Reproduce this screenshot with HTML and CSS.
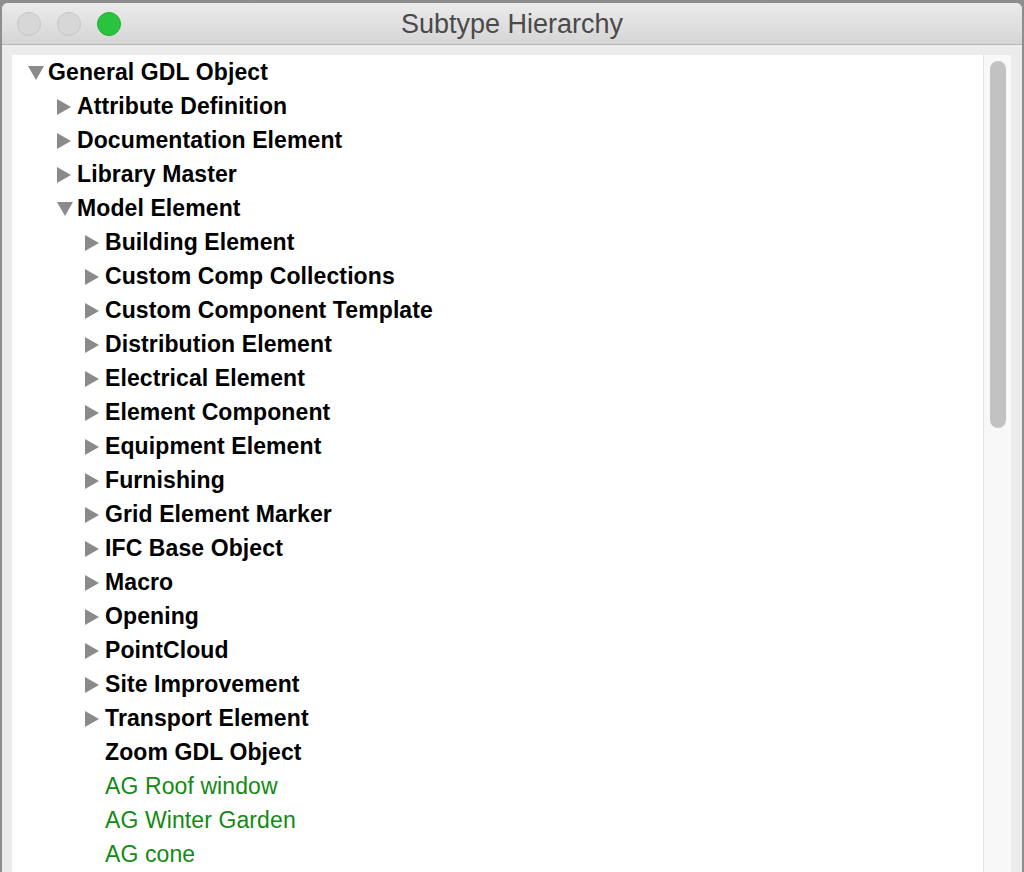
FILE: index.html
```html
<!DOCTYPE html>
<html>
<head>
<meta charset="utf-8">
<title>Subtype Hierarchy</title>
<link rel="stylesheet" href="styles.css">
</head>
<body>
<div class="window">
  <div class="titlebar">
    <div class="lights">
      <span class="light gray"></span>
      <span class="light gray"></span>
      <span class="light green"></span>
    </div>
    <div class="title">Subtype Hierarchy</div>
  </div>
  <div class="content">
    <div class="panel">
      <ul class="tree">
        <li class="row l0"><span class="tri open"></span><span class="label">General GDL Object</span></li>
        <li class="row l1"><span class="tri closed"></span><span class="label">Attribute Definition</span></li>
        <li class="row l1"><span class="tri closed"></span><span class="label">Documentation Element</span></li>
        <li class="row l1"><span class="tri closed"></span><span class="label">Library Master</span></li>
        <li class="row l1"><span class="tri open"></span><span class="label">Model Element</span></li>
        <li class="row l2"><span class="tri closed"></span><span class="label">Building Element</span></li>
        <li class="row l2"><span class="tri closed"></span><span class="label">Custom Comp Collections</span></li>
        <li class="row l2"><span class="tri closed"></span><span class="label">Custom Component Template</span></li>
        <li class="row l2"><span class="tri closed"></span><span class="label">Distribution Element</span></li>
        <li class="row l2"><span class="tri closed"></span><span class="label">Electrical Element</span></li>
        <li class="row l2"><span class="tri closed"></span><span class="label">Element Component</span></li>
        <li class="row l2"><span class="tri closed"></span><span class="label">Equipment Element</span></li>
        <li class="row l2"><span class="tri closed"></span><span class="label">Furnishing</span></li>
        <li class="row l2"><span class="tri closed"></span><span class="label">Grid Element Marker</span></li>
        <li class="row l2"><span class="tri closed"></span><span class="label">IFC Base Object</span></li>
        <li class="row l2"><span class="tri closed"></span><span class="label">Macro</span></li>
        <li class="row l2"><span class="tri closed"></span><span class="label">Opening</span></li>
        <li class="row l2"><span class="tri closed"></span><span class="label">PointCloud</span></li>
        <li class="row l2"><span class="tri closed"></span><span class="label">Site Improvement</span></li>
        <li class="row l2"><span class="tri closed"></span><span class="label">Transport Element</span></li>
        <li class="row l2"><span class="tri none"></span><span class="label">Zoom GDL Object</span></li>
        <li class="row l2 leaf"><span class="tri none"></span><span class="label">AG Roof window</span></li>
        <li class="row l2 leaf"><span class="tri none"></span><span class="label">AG Winter Garden</span></li>
        <li class="row l2 leaf"><span class="tri none"></span><span class="label">AG cone</span></li>
      </ul>
      <div class="scrollbar"><div class="thumb"></div></div>
    </div>
  </div>
</div>
</body>
</html>
```

FILE: styles.css
```css
html, body {
  margin: 0;
  padding: 0;
  height: 100%;
  overflow: hidden;
}
body {
  background: #8e8e8e;
  font-family: "Liberation Sans", Arial, sans-serif;
}
.window {
  margin: 3px 2px 0 2px;
  height: 869px;
  background: #ececec;
  border-radius: 6px 6px 0 0;
  overflow: hidden;
  display: flex;
  flex-direction: column;
}
.titlebar {
  height: 41px;
  flex: none;
  background: linear-gradient(#ebebeb, #d5d5d5);
  border-bottom: 1px solid #b5b5b5;
  position: relative;
  display: flex;
  align-items: center;
}
.lights {
  display: flex;
  gap: 16px;
  padding-left: 15px;
  padding-top: 1px;
}
.light {
  width: 24px;
  height: 24px;
  border-radius: 50%;
  box-sizing: border-box;
}
.light.gray {
  background: #d7d7d7;
  border: 1px solid #c6c6c6;
}
.light.green {
  background: #2ac33f;
  border: 1px solid #22ad33;
}
.title {
  position: absolute;
  left: 0;
  right: 0;
  top: 0;
  bottom: 0;
  display: flex;
  align-items: center;
  justify-content: center;
  font-size: 27px;
  color: #4a4a4a;
  padding-top: 2px;
  pointer-events: none;
}
.content {
  flex: 1;
  padding: 10px 11px 0 10px;
  display: flex;
  min-height: 0;
}
.panel {
  flex: 1;
  display: flex;
  background: #fff;
}
.tree {
  list-style: none;
  margin: 0;
  padding: 0;
  flex: 1;
}
.row {
  height: 34px;
  box-sizing: border-box;
  padding-top: 1px;
  display: flex;
  align-items: center;
  font-size: 23px;
  font-weight: bold;
  letter-spacing: 0.1px;
  color: #000;
  white-space: nowrap;
}
.row.l0 { padding-left: 16px; }
.row.l1 { padding-left: 45px; }
.row.l2 { padding-left: 73px; }
.row.leaf .label {
  font-weight: normal;
  color: #138a13;
}
.tri {
  width: 20px;
  height: 16px;
  flex: none;
  position: relative;
}
.tri.closed::before {
  content: "";
  position: absolute;
  left: 0;
  top: 0;
  border-left: 14px solid #8a8a8a;
  border-top: 8px solid transparent;
  border-bottom: 8px solid transparent;
}
.tri.open::before {
  content: "";
  position: absolute;
  left: 0;
  top: 1px;
  border-top: 14px solid #8a8a8a;
  border-left: 8px solid transparent;
  border-right: 8px solid transparent;
}
.scrollbar {
  width: 27px;
  flex: none;
  background: #f8f8f8;
  border-left: 1px solid #e4e4e4;
  display: flex;
  justify-content: center;
  align-items: flex-start;
  padding-top: 6px;
  box-sizing: content-box;
}
.thumb {
  width: 16px;
  height: 367px;
  border-radius: 8px;
  background: #c2c2c2;
}
```
